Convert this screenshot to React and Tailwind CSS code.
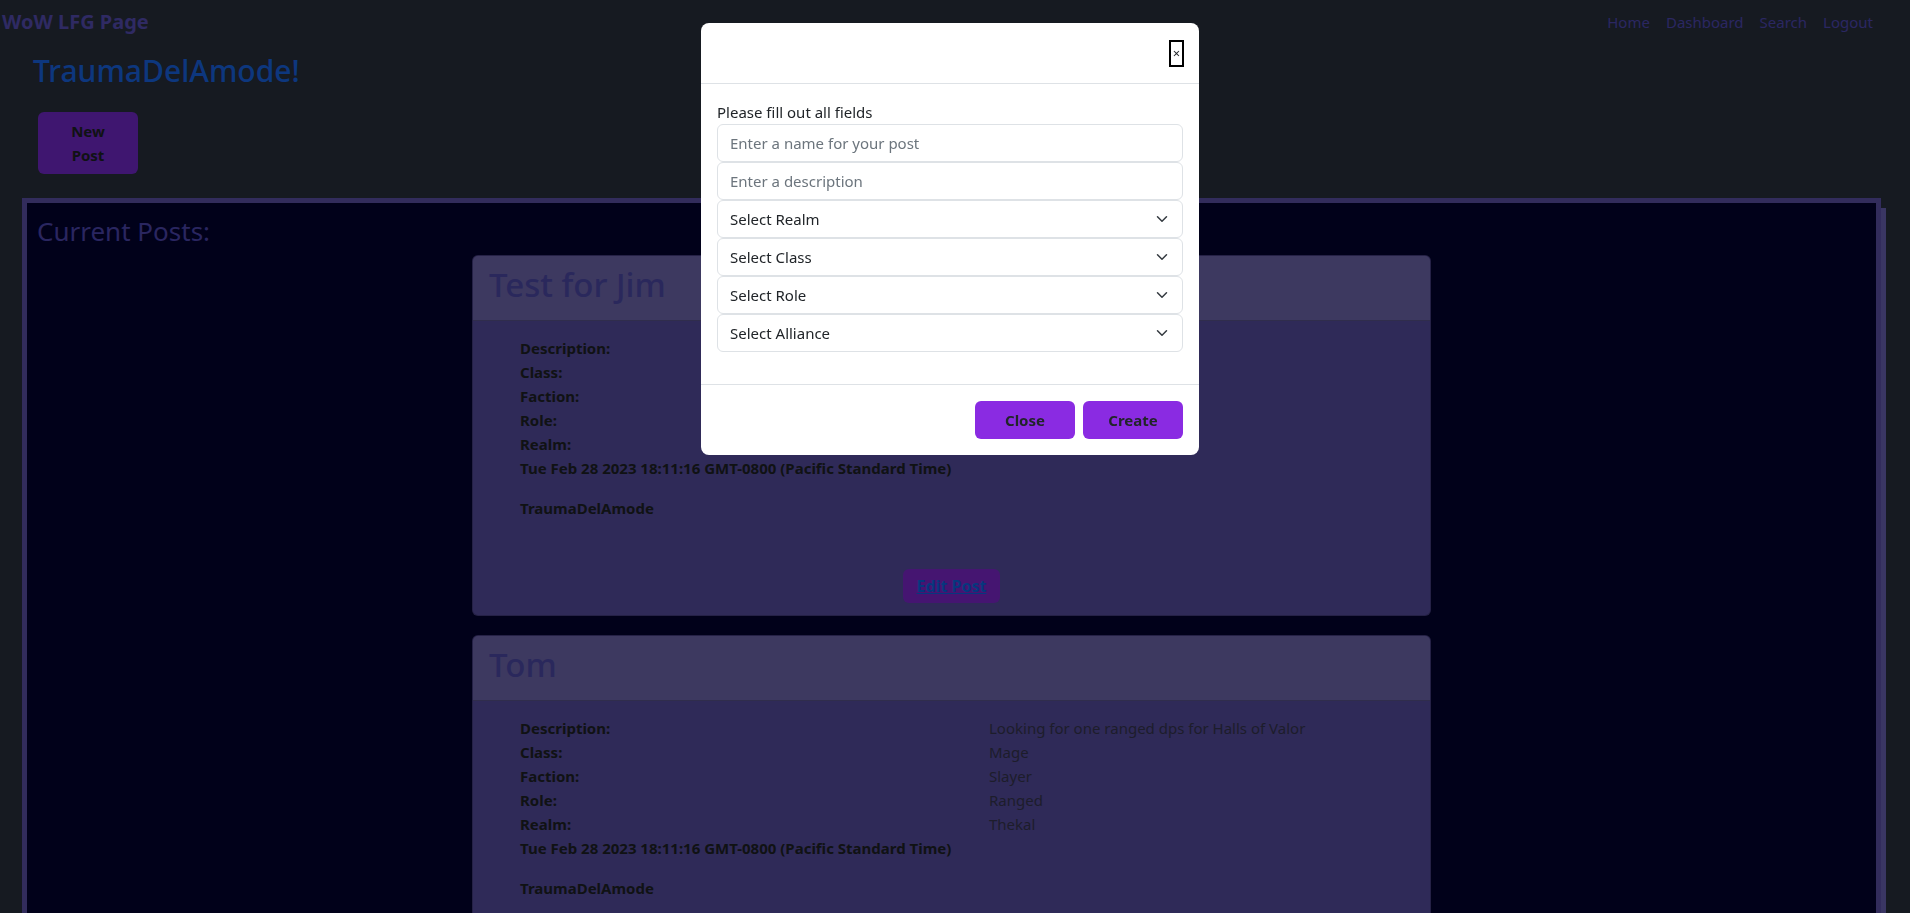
import React from "react";

const posts = [
  {
    id: 1,
    name: "Test for Jim",
    description: "",
    charClass: "",
    faction: "",
    role: "",
    realm: "",
    date: "Tue Feb 28 2023 18:11:16 GMT-0800 (Pacific Standard Time)",
    author: "TraumaDelAmode",
  },
  {
    id: 2,
    name: "Tom",
    description: "Looking for one ranged dps for Halls of Valor",
    charClass: "Mage",
    faction: "Slayer",
    role: "Ranged",
    realm: "Thekal",
    date: "Tue Feb 28 2023 18:11:16 GMT-0800 (Pacific Standard Time)",
    author: "TraumaDelAmode",
  },
];

const selects = ["Select Realm", "Select Class", "Select Role", "Select Alliance"];

const Chevron = () => (
  <svg width="16" height="12" viewBox="0 0 16 16" fill="none" stroke="#343a40" strokeWidth="2" strokeLinecap="round" strokeLinejoin="round">
    <path d="m2 5 6 6 6-6" />
  </svg>
);

const PostCard = ({ post }) => {
  const rows = [
    ["Description:", post.description],
    ["Class:", post.charClass],
    ["Faction:", post.faction],
    ["Role:", post.role],
    ["Realm:", post.realm],
  ];
  return (
    <div className="w-[959px] mx-auto mb-[19px] rounded-[6px] border border-black/20 overflow-hidden bg-[#5e54b0]">
      {/* Card header */}
      <div className="bg-[#7a72c0] border-b border-black/20 px-[16px] pt-[10px] pb-[16px]">
        <h2 className="text-[33px] leading-[38px] font-medium text-[#5450b8]">{post.name}</h2>
      </div>
      {/* Card body */}
      <div className="px-[47px] pt-[15px] pb-[12px] text-[15px] leading-[24px]">
        <div className="grid grid-cols-[469px_1fr]">
          {rows.map(([label, value]) => (
            <React.Fragment key={label}>
              <span className="font-bold text-[#212529]">{label}</span>
              <span className="font-normal text-[#3a3a56]">{value}</span>
            </React.Fragment>
          ))}
        </div>
        <p className="font-bold text-[#212529]">{post.date}</p>
        <p className="font-bold text-[#212529] mt-[16px]">{post.author}</p>
        <div className="flex justify-center mt-[49px]">
          <button className="h-[34px] px-[14px] rounded-[6px] bg-[#8a2be2] font-bold text-[16px] text-[#0d6efd] underline">
            Edit Post
          </button>
        </div>
      </div>
    </div>
  );
};

export default function App() {
  return (
    <div className="min-h-screen bg-[#2c3442]" style={{ fontFamily: '"Noto Sans", "Open Sans", sans-serif' }}>
      {/* Navbar */}
      <nav className="h-[44px] flex items-center justify-between pl-[2px] pr-[29px]">
        <span className="text-[20px] font-bold text-[#5e54c6]">WoW LFG Page</span>
        <div className="flex text-[15px] text-[#564ec2]">
          <a className="px-[8px]">Home</a>
          <a className="px-[8px]">Dashboard</a>
          <a className="px-[8px]">Search</a>
          <a className="px-[8px]">Logout</a>
        </div>
      </nav>

      <h1 className="ml-[33px] mt-[8px] text-[30px] leading-[38px] font-medium text-[#1a6ffd]">TraumaDelAmode!</h1>

      <button className="ml-[38px] mt-[22px] w-[100px] h-[62px] rounded-[6px] bg-[#7e2ce0] font-bold text-[15px] leading-[24px] text-[#212529] flex flex-col items-center justify-center">
        <span>New</span>
        <span>Post</span>
      </button>

      {/* Posts container */}
      <div className="ml-[22px] mr-[29px] mt-[24px] border-[5px] border-[#6458b8] bg-[#020234] shadow-[5px_10px_0_#746cc6] pt-[11px] pb-[20px]">
        <h3 className="ml-[10px] text-[26px] leading-[34px] text-[#544cc0] mb-[7px]">Current Posts:</h3>
        {posts.map((post) => (
          <PostCard key={post.id} post={post} />
        ))}
      </div>

      {/* Backdrop */}
      <div className="fixed inset-0 bg-black/50" />

      {/* Modal */}
      <div className="fixed left-[701px] top-[23px] w-[498px] bg-white rounded-[8px] text-[#212529]">
        <div className="h-[61px] border-b border-[#dee2e6] flex items-center justify-end pr-[15px]">
          <button className="w-[15px] h-[27px] border-2 border-black bg-white text-[13px] leading-none flex items-center justify-center">
            ×
          </button>
        </div>
        <div className="px-[16px] pt-[16px] pb-[32px] text-[15px]">
          <p className="leading-[24px]">Please fill out all fields</p>
          <input
            placeholder="Enter a name for your post"
            className="block w-full h-[38px] px-[12px] border border-[#dee2e6] rounded-[6px] placeholder:text-[#6c757d] outline-none"
          />
          <input
            placeholder="Enter a description"
            className="block w-full h-[38px] px-[12px] border border-[#dee2e6] rounded-[6px] placeholder:text-[#6c757d] outline-none"
          />
          {selects.map((s) => (
            <div
              key={s}
              className="w-full h-[38px] pl-[12px] pr-[12px] border border-[#dee2e6] rounded-[6px] flex items-center justify-between"
            >
              <span>{s}</span>
              <Chevron />
            </div>
          ))}
        </div>
        <div className="border-t border-[#dee2e6] px-[12px] py-[12px] flex justify-end">
          <button className="m-[4px] w-[100px] h-[38px] rounded-[6px] bg-[#8a2be2] font-bold text-[15px] text-[#212529]">Close</button>
          <button className="m-[4px] w-[100px] h-[38px] rounded-[6px] bg-[#8a2be2] font-bold text-[15px] text-[#212529]">Create</button>
        </div>
      </div>
    </div>
  );
}
